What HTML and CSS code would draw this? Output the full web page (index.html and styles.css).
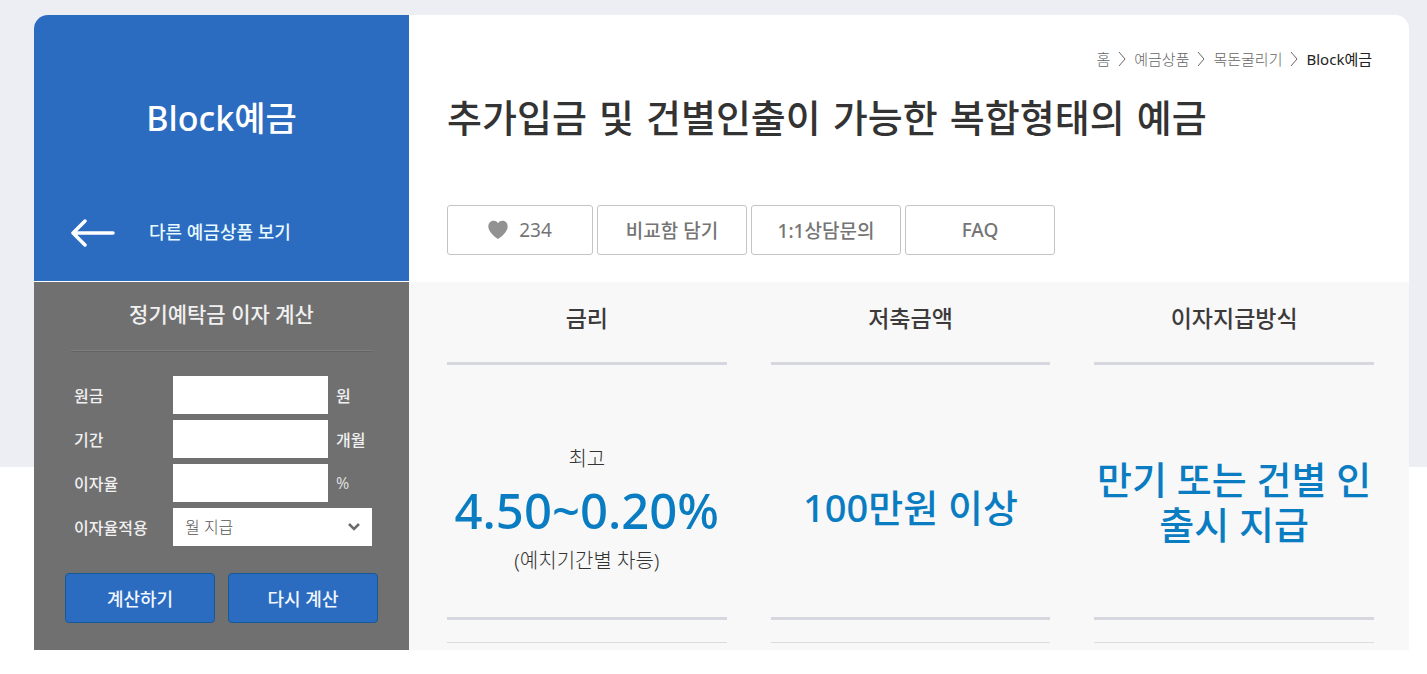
FILE: index.html
```html
<!DOCTYPE html>
<html lang="ko">
<head>
<meta charset="utf-8">
<meta name="viewport" content="width=device-width, initial-scale=1">
<title>Block예금</title>
<link rel="stylesheet" href="styles.css">
</head>
<body>
<div class="product">
  <aside class="side">
    <div class="side-head">
      <h2 class="side-title">Block예금</h2>
      <a class="side-link" href="#">
        <svg class="arrow" width="46" height="30" viewBox="0 0 46 30" fill="none" stroke="currentColor" stroke-width="3.500" stroke-linecap="round" stroke-linejoin="round" aria-hidden="true"><path d="M14 4 2 16l12 12M3 16h39"/></svg>
        <span>다른 예금상품 보기</span>
      </a>
    </div>
    <form class="calc">
      <h3 class="calc-title">정기예탁금 이자 계산</h3>
      <div class="calc-fields">
        <label for="principal">원금</label>
        <input id="principal" type="text">
        <span>원</span>
        <label for="period">기간</label>
        <input id="period" type="text">
        <span>개월</span>
        <label for="rate">이자율</label>
        <input id="rate" type="text">
        <span class="unit-light">%</span>
        <label for="method">이자율적용</label>
        <div class="select-box">
          <select id="method"><option>월 지급</option></select>
          <svg class="chevron" width="14" height="10" viewBox="0 0 14 10" fill="none" stroke="currentColor" stroke-width="2.500" aria-hidden="true"><path d="m2 2 5 5 5-5"/></svg>
        </div>
      </div>
      <div class="calc-actions">
        <button type="button">계산하기</button>
        <button type="reset">다시 계산</button>
      </div>
    </form>
  </aside>
  <main class="main">
    <header class="main-head">
      <nav class="crumbs" aria-label="breadcrumb">
        <a href="#">홈</a>
        <svg width="8" height="16" viewBox="0 0 8 16" fill="none" stroke="currentColor" aria-hidden="true"><path d="m1 1 6 7-6 7"/></svg>
        <a href="#">예금상품</a>
        <svg width="8" height="16" viewBox="0 0 8 16" fill="none" stroke="currentColor" aria-hidden="true"><path d="m1 1 6 7-6 7"/></svg>
        <a href="#">목돈굴리기</a>
        <svg width="8" height="16" viewBox="0 0 8 16" fill="none" stroke="currentColor" aria-hidden="true"><path d="m1 1 6 7-6 7"/></svg>
        <a class="current" href="#">Block예금</a>
      </nav>
      <h1 class="title">추가입금 및 건별인출이 가능한 복합형태의 예금</h1>
      <div class="actions">
        <button class="like" type="button">
          <svg width="20" height="20" viewBox="0 0 20 20" fill="#929292" aria-hidden="true"><path d="M10 3.2C8.500.8 5.500.4 3.300 1.300 1 2.300 0 4.700.4 7.600 1 11.500 5 16 10 19c5-3 9-7.500 9.600-11.400C20 4.700 19 2.300 16.700 1.300 14.500.4 11.500.8 10 3.200Z"/></svg>
          <span>234</span>
        </button>
        <button type="button">비교함 담기</button>
        <button type="button">1:1상담문의</button>
        <button type="button">FAQ</button>
      </div>
    </header>
    <div class="facts">
      <section class="fact">
        <h3>금리</h3>
        <div class="fact-body with-notes">
          <p>최고</p>
          <strong class="rate">4.50~0.20%</strong>
          <p>(예치기간별 차등)</p>
        </div>
      </section>
      <section class="fact">
        <h3>저축금액</h3>
        <div class="fact-body"><strong>100만원 이상</strong></div>
      </section>
      <section class="fact">
        <h3>이자지급방식</h3>
        <div class="fact-body two-lines"><strong>만기 또는 건별 인출시 지급</strong></div>
      </section>
    </div>
  </main>
</div>
</body>
</html>
```
FILE: styles.css
```css
* { box-sizing: border-box; }

body {
  margin: 0;
  padding: 15px 18px 24px 34px;
  background: linear-gradient(#eceef3, #eceef3) 0 0 / 100% 467px no-repeat #fff;
  color: #333;
  font-family: "Noto Sans", "Noto Sans CJK KR", sans-serif;
}

h1, h2, h3, p { margin: 0; font-weight: 500; }
a { color: inherit; text-decoration: none; }
button, input, select { font-family: inherit; border-radius: 0; }

.product {
  display: grid;
  grid-template-columns: 375px 1fr;
  border-radius: 14px 14px 0 0;
  overflow: hidden;
  background: #fff;
}

.side { display: flex; flex-direction: column; gap: 1px; color: #fff; }

.side-head {
  height: 266px;
  padding: 76px 37px 0;
  background: #2b6bc0;
}
.side-title {
  font-size: 34px;
  line-height: 54px;
  text-align: center;
}
.side-link {
  display: flex;
  align-items: center;
  gap: 32px;
  margin-top: 72px;
  font-size: 18px;
  font-weight: 500;
  line-height: 30px;
  color: #e6faff;
}
.arrow { color: #fff; }

.calc {
  flex: 1;
  padding: 16px 31px 27px;
  background: #707070;
  color: #f0f0f0;
}
.calc-title {
  margin: 0 6px;
  padding-bottom: 19px;
  border-bottom: 1px solid #7e7e7e;
  box-shadow: 0 1px #646464;
  font-size: 21px;
  line-height: 33px;
  text-align: center;
}
.calc-fields {
  display: grid;
  grid-template-columns: 99px 155px 1fr;
  grid-auto-rows: 38px;
  row-gap: 6px;
  align-items: center;
  margin: 25px 0 27px;
  padding: 0 6px 0 9px;
  font-size: 16px;
  font-weight: 500;
}
.calc-fields > span { padding-left: 8px; white-space: nowrap; }
.calc-fields > .unit-light { font-weight: 400; color: #ddd; }
.calc-fields input {
  width: 100%;
  height: 38px;
  border: 0;
  background: #fff;
}
.select-box { position: relative; grid-column: span 2; }
.select-box select {
  display: block;
  width: 100%;
  height: 38px;
  padding: 0 12px;
  border: 0;
  background: #fff;
  color: #555;
  font-size: 16px;
  font-weight: 300;
  appearance: none;
}
.chevron {
  position: absolute;
  top: 14px;
  right: 11px;
  color: #6b6b6b;
  pointer-events: none;
}
.calc-actions { display: grid; grid-template-columns: 1fr 1fr; gap: 13px; }
.calc-actions button {
  height: 50px;
  padding: 0;
  border: 1px solid #15599b;
  border-radius: 4px;
  background: #2b6bc0;
  color: #f2f7ff;
  font-size: 18px;
  font-weight: 500;
}

.main { display: flex; flex-direction: column; }
.main-head { height: 267px; padding: 32px 37px 0 38px; }
.crumbs {
  display: flex;
  justify-content: flex-end;
  align-items: center;
  gap: 8px;
  color: #666;
  font-size: 15px;
  font-weight: 300;
  line-height: 24px;
}
.crumbs .current { color: #222; font-weight: 400; }
.title {
  margin-top: 20px;
  font-family: "DejaVu Sans", "Noto Sans CJK KR", sans-serif;
  font-size: 38px;
  line-height: 56px;
}
.actions { display: flex; gap: 4px; margin-top: 58px; }
.actions button {
  width: 150px;
  height: 50px;
  padding: 0;
  border: 1px solid #c4c4c4;
  border-radius: 3px;
  background: #fff;
  color: #757575;
  font-size: 19px;
  font-weight: 500;
}
.actions .like {
  display: flex;
  justify-content: center;
  align-items: center;
  gap: 11px;
  width: 146px;
  font-weight: 400;
}

.facts {
  flex: 1;
  display: grid;
  grid-template-columns: repeat(3, 1fr);
  gap: 44px;
  padding: 0 35px 7px 38px;
  background: #f8f8f8;
}
.fact {
  display: flex;
  flex-direction: column;
  padding-bottom: 22px;
  border-bottom: 1px solid #dcdce0;
  text-align: center;
}
.fact h3 {
  padding: 19px 0 27px;
  border-bottom: 3px solid #d7d8df;
  color: #3d3a3b;
  font-size: 23px;
  font-weight: 500;
  line-height: 34px;
}
.fact-body {
  flex: 1;
  display: flex;
  flex-direction: column;
  justify-content: center;
  padding-top: 32px;
  border-bottom: 3px solid #d7d8df;
}
.fact-body.with-notes { padding-top: 38px; }
.fact-body.two-lines { padding-top: 22px; }
.fact-body p {
  font-size: 20px;
  font-weight: 300;
  line-height: 30px;
}
.fact-body strong {
  color: #0a7dc2;
  font-size: 38px;
  font-weight: 500;
  line-height: 45px;
}
.fact-body .rate { font-size: 49px; line-height: 72px; }
```
